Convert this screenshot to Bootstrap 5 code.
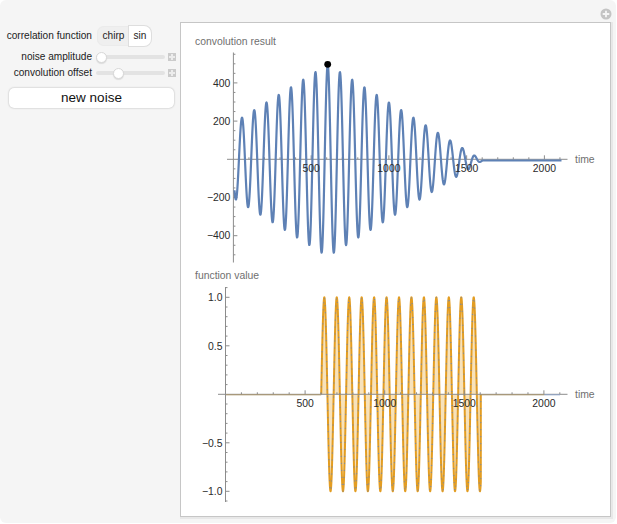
<!DOCTYPE html>
<html lang="en">
<head>
  <meta charset="UTF-8" />
  <title>Correlation function</title>
  <link href="https://cdn.jsdelivr.net/npm/bootstrap@5.3.3/dist/css/bootstrap.min.css" rel="stylesheet" />
  <style>
    body { background: #fff; font-family: "Liberation Sans", Arial, sans-serif; overflow: hidden; }
    .demo { width: 616px; height: 523px; background: #f5f5f5; border-radius: 6px; position: relative; }
    .controls { width: 180px; padding-top: 26px; flex: none; }
    .ctl-label { width: 92px; flex: none; text-align: right; font-size: 10.1px; color: #222; white-space: nowrap; }
    .ctl-row { height: 16px; }
    .setter-row { margin-bottom: 3px; }

    /* setter bar */
    .setter { margin-left: 5px; background: #efefef; border-radius: 7px; height: 20px; box-shadow: inset 0 0 0 1px #ebebeb; }
    .setter .btn { font-size: 10.1px; line-height: 1; padding: 0; width: 33px; height: 20px; border: 0; color: #222; border-radius: 7px; background: transparent; }
    .setter .btn.on { width: 22px; background: #fff; box-shadow: 0 0 0 1px #dedede; }

    /* sliders */
    .form-range { width: 69px; height: 12px; margin-left: 4px; padding: 0; flex: none; }
    .form-range::-webkit-slider-runnable-track { height: 4px; background: #e3e3e3; border-radius: 2px; }
    .form-range::-webkit-slider-thumb { width: 11px; height: 11px; margin-top: -3.5px; background: #fff; border: 1px solid #d8d8d8; border-radius: 50%; box-shadow: 0 1px 1px rgba(0,0,0,.1); }
    .plus-box { width: 8px; height: 8px; margin-left: 3px; background: #cbcbcb; flex: none; position: relative; }
    .plus-box::before { content: ""; position: absolute; left: 1px; right: 1px; top: 3px; height: 2px; background: #ececec; }
    .plus-box::after { content: ""; position: absolute; top: 1px; bottom: 1px; left: 3px; width: 2px; background: #ececec; }

    .btn-noise { display: block; width: 165px; height: 20px; margin: 7px 0 0 9px; padding: 0; background: #fff; border: 0; border-radius: 5px; font-size: 13.5px; line-height: 20px; color: #111; box-shadow: 0 0 2px rgba(0,0,0,.3); }
    .btn-noise:hover { background: #fff; color: #111; }

    .plot-panel { width: 431px; height: 495px; margin-top: 22px; background: #fff; border: 1px solid #c6c6c6; box-shadow: 1px 1px 0 1px #e8e8e8; flex: none; }
    .plot-panel svg { display: block; }
    .plot-panel text { font-family: "Liberation Sans", Arial, sans-serif; font-size: 10.4px; }
    .tick-label { fill: #2a2a2a; }
    .axis-label { fill: #6f6f6f; }

    .corner-plus { position: absolute; top: 8px; left: 600px; }
  </style>
</head>
<body>
  <div class="demo d-flex">
    <svg class="corner-plus" width="12" height="12" viewBox="0 0 12 12">
      <circle cx="6" cy="6" r="5.5" fill="#c4c4c4"/>
      <path d="M6 2.7v6.6M2.7 6h6.6" stroke="#f5f5f5" stroke-width="1.8"/>
    </svg>

    <!-- Controls -->
    <div class="controls">
      <div class="d-flex align-items-center setter-row">
        <div class="ctl-label">correlation function</div>
        <div class="setter btn-group" role="group">
          <button type="button" class="btn">chirp</button>
          <button type="button" class="btn on">sin</button>
        </div>
      </div>
      <div class="d-flex align-items-center ctl-row">
        <div class="ctl-label">noise amplitude</div>
        <input type="range" class="form-range" min="0" max="100" value="0" />
        <span class="plus-box"></span>
      </div>
      <div class="d-flex align-items-center ctl-row">
        <div class="ctl-label">convolution offset</div>
        <input type="range" class="form-range" min="0" max="100" value="30" />
        <span class="plus-box"></span>
      </div>
      <button type="button" class="btn btn-noise">new noise</button>
    </div>

    <!-- Plots, drawn in page coordinates -->
    <div class="plot-panel">
      <svg id="plots" width="431" height="495" viewBox="181 23 431 495"></svg>
    </div>
  </div>

  <script src="https://cdn.jsdelivr.net/npm/bootstrap@5.3.3/dist/js/bootstrap.bundle.min.js"></script>
  <script>
    const svg = document.getElementById("plots");
    let out = "";
    let labels = ""; // labels sit on top of the curves

    function line(x1, y1, x2, y2, color = "#8c8c8c") {
      out += `<line x1="${x1}" y1="${y1}" x2="${x2}" y2="${y2}" stroke="${color}" stroke-width="1"/>`;
    }
    function label(text, x, y, anchor, cls) {
      labels += `<text x="${x}" y="${y}" text-anchor="${anchor}" class="${cls}">${text}</text>`;
    }

    // Axes with ticks: x0,y0 = origin pixel, sx = px per 100 in time, sy = px per minor y step
    function axes(p) {
      line(p.xFrom, p.y0, 567.5, p.y0);
      line(p.x0, p.yFrom, p.x0, p.yTo);
      for (let i = 1; i <= 21; i++) {
        const x = p.x0 + i * p.sx;
        if (x > 562) break;
        line(x, p.y0 - (i % 5 ? 2 : 4), x, p.y0);
        if (i % 5 === 0) label(i * 100, x, p.y0 + 13, "middle", "tick-label");
      }
      for (let i = -30; i <= 30; i++) {
        const y = p.y0 - i * p.sy;
        if (i === 0 || y < p.yFrom || y > p.yTo) continue;
        const major = i % p.majorEvery === 0;
        line(p.x0, y, p.x0 + (major ? 4 : 2), y);
        if (major) label(p.fmt(i), p.x0 - 3, y + 3.7, "end", "tick-label");
      }
      label("time", 575, p.y0 + 4, "start", "axis-label");
    }

    // Top plot: convolution result
    axes({ x0: 233.4, y0: 159.3, sx: 15.55, sy: 9.55, xFrom: 227, yFrom: 52.5, yTo: 262.5, majorEvery: 4,
           fmt: i => (i < 0 ? "\u2212" : "") + Math.abs(i * 50) });
    label("convolution result", 195, 45, "start", "axis-label");

    const topPts = [];
    for (let x = 234.5; x <= 561.7; x += 0.25) {
      const env = Math.max(0, 96 - 0.62 * Math.abs(x - 327.7));
      const y = 160.5 - env * Math.cos(2 * Math.PI * (x - 327.7) / 12.25);
      topPts.push(x.toFixed(2) + "," + y.toFixed(2));
    }
    out += `<polyline points="${topPts.join(" ")}" fill="none" stroke="#5e81b5" stroke-width="2.2" stroke-linejoin="round"/>`;
    out += `<circle cx="327.7" cy="64.3" r="3.4" fill="#000"/>`;

    // Bottom plot: function value
    const wave = [];
    for (let x = 321.2; x <= 480.8; x += 0.2) {
      const y = 394.3 - 97 * Math.sin(2 * Math.PI * (x - 321.2) / 12.45);
      wave.push(x.toFixed(2) + "," + y.toFixed(2));
    }
    const curve = `321.2,394.3 ${wave.join(" ")} 480.8,394.3`;
    out += `<polygon points="${curve}" fill="#e69f1f" fill-opacity=".3"/>`;
    out += `<polyline points="${curve}" fill="none" stroke="#e39d22" stroke-width="2" stroke-linejoin="round"/>`;
    out += `<polyline points="${curve}" fill="none" stroke="#6f86b0" stroke-width="1" stroke-dasharray="1 6"/>`;
    axes({ x0: 225.5, y0: 394.3, sx: 15.92, sy: 9.7, xFrom: 218, yFrom: 287, yTo: 502, majorEvery: 5,
           fmt: i => (i < 0 ? "\u2212" : "") + (Math.abs(i) / 10).toFixed(1) });
    label("function value", 195, 279, "start", "axis-label");

    // flat stretches either side of the wave: orange over blue reads as brown
    line(226, 394.8, 321.2, 394.8, "#a8936a");
    line(480.8, 394.8, 544.4, 394.8, "#a8936a");
    line(544.4, 394.8, 560, 394.8, "#8da3c8");

    svg.innerHTML = out + labels;
  </script>
</body>
</html>
